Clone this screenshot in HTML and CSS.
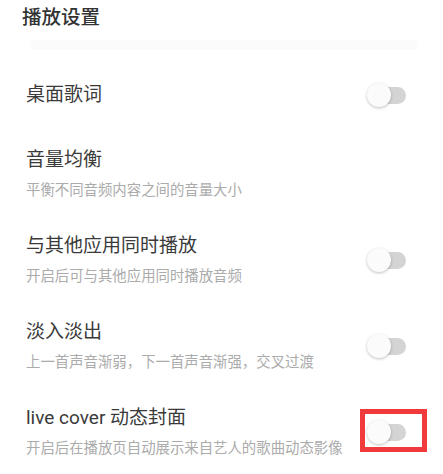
FILE: index.html
```html
<!DOCTYPE html>
<html lang="zh-CN">
<head>
    <meta charset="UTF-8">
    <meta name="viewport" content="width=device-width, initial-scale=1.0">
    <title>播放设置</title>
    <link rel="stylesheet" href="styles.css">
</head>
<body>
    <div class="page">
        <div class="header">
            <h1>播放设置</h1>
            <div class="header-divider"></div>
        </div>

        <div class="setting-row single">
            <div class="setting-text">
                <div class="setting-title">桌面歌词</div>
            </div>
            <span class="switch"></span>
        </div>

        <div class="setting-row">
            <div class="setting-text">
                <div class="setting-title">音量均衡</div>
                <div class="setting-desc">平衡不同音频内容之间的音量大小</div>
            </div>
        </div>

        <div class="setting-row">
            <div class="setting-text">
                <div class="setting-title">与其他应用同时播放</div>
                <div class="setting-desc">开启后可与其他应用同时播放音频</div>
            </div>
            <span class="switch"></span>
        </div>

        <div class="setting-row">
            <div class="setting-text">
                <div class="setting-title">淡入淡出</div>
                <div class="setting-desc">上一首声音渐弱，下一首声音渐强，交叉过渡</div>
            </div>
            <span class="switch"></span>
        </div>

        <div class="setting-row">
            <div class="setting-text">
                <div class="setting-title">live cover 动态封面</div>
                <div class="setting-desc">开启后在播放页自动展示来自艺人的歌曲动态影像</div>
            </div>
            <span class="switch">
                <span class="frame"></span>
            </span>
        </div>
    </div>
</body>
</html>
```

FILE: styles.css
```css
* {
    margin: 0;
    padding: 0;
    box-sizing: border-box;
}

body {
    background: #fff;
    font-family: Roboto, "Noto Sans CJK SC", sans-serif;
    color: #3a3a3a;
    width: 443px;
    height: 474px;
    overflow: hidden;
}

.header {
    padding: 5px 0 0 22px;
}

.header h1 {
    font-size: 19.5px;
    font-weight: 500;
    line-height: 26px;
    color: #333;
}

.header-divider {
    height: 10px;
    margin: 9px 25px 9px 8px;
    border-radius: 5px;
    background: #fbfbfb;
}

.setting-row {
    display: flex;
    align-items: center;
    justify-content: space-between;
    padding: 16px 37px 16px 26px;
}

.setting-row.single {
    padding-top: 23px;
    padding-bottom: 23px;
}

.setting-title {
    font-size: 19px;
    line-height: 26px;
    color: #3a3a3a;
}

.setting-desc {
    margin-top: 8px;
    font-size: 14.4px;
    line-height: 20px;
    color: #ababab;
}

.switch {
    position: relative;
    flex: none;
    width: 39px;
    height: 24px;
}

.switch::before {
    content: "";
    position: absolute;
    left: 6px;
    top: 4px;
    width: 33px;
    height: 17px;
    border-radius: 9px;
    background: #d4d4d4;
}

.switch::after {
    content: "";
    position: absolute;
    left: 0;
    top: 0;
    width: 24px;
    height: 24px;
    border-radius: 50%;
    background: #fbfbfb;
    box-shadow: 0 1px 3px rgba(0, 0, 0, 0.25);
}

/* red annotation frame drawn over the last toggle */
.frame {
    position: absolute;
    left: -7px;
    top: -11px;
    width: 67px;
    height: 43px;
    border: 5px solid #f13a3c;
    z-index: 2;
}
```
